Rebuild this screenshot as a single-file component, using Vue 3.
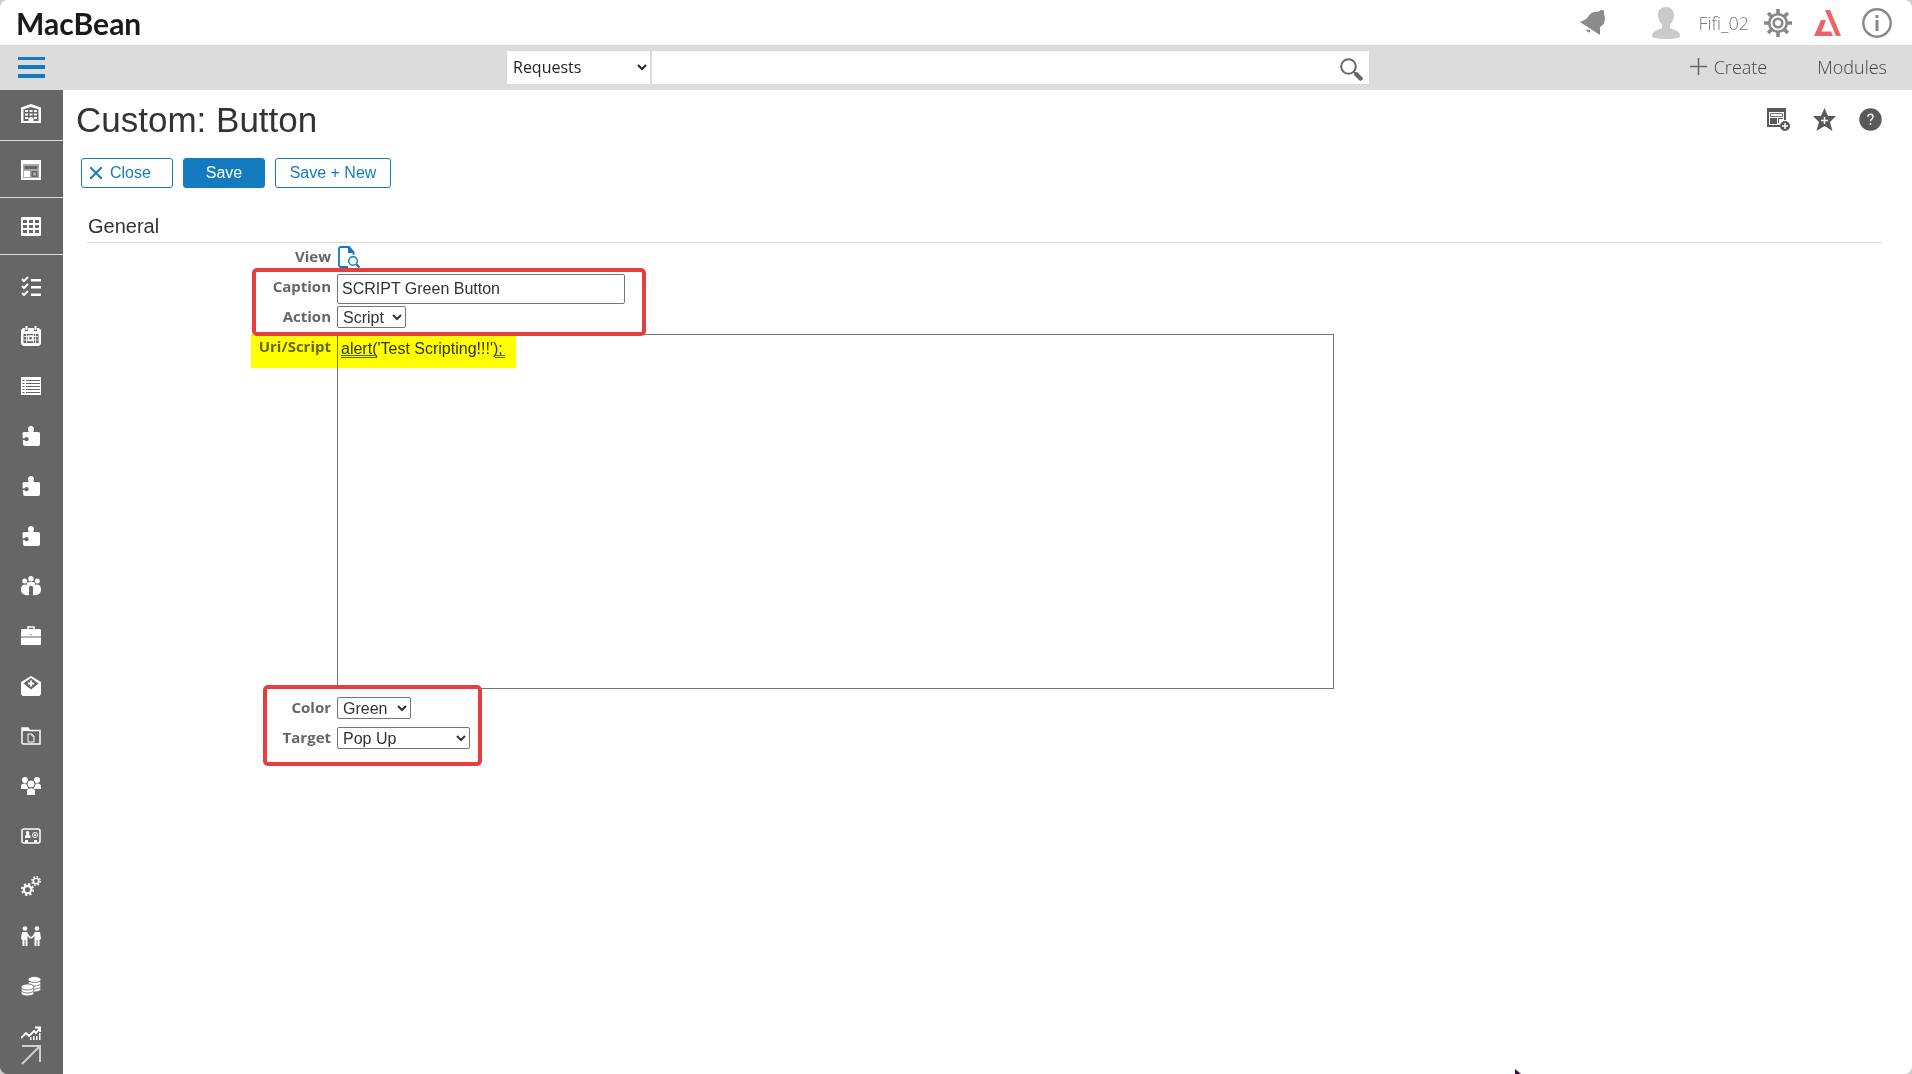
<script setup>
import { ref } from 'vue'

const scope = ref('Requests')
const query = ref('')
const caption = ref('SCRIPT Green Button')
const action = ref('Script')
const script = ref("alert('Test Scripting!!!');")
const color = ref('Green')
const target = ref('Pop Up')

const puzzle = '<path d="M1.500 7.500Q1.500 6 3 6h4c.8 0 .8-.6.4-1.100C6.200 2.500 7.600 0 10 0s3.800 2.500 2.600 4.900c-.4.5-.4 1.100.4 1.100h4.500q1.500 0 1.500 1.500v10.500q0 2-2 2H4q-2 0-2-2z"/><circle cx="5.500" cy="13.200" r="2.100" fill="#666"/><path d="M0 13.200h4" stroke="#666" stroke-width="1.600"/>'

const pinned = [
  { name: 'Company', svg: '<path d="M0 3.500 10 0l10 3.500V19H0z"/><path fill="#666" d="M2.500 5.200 10 3l7.500 2.200V17h-5v-3h-5v3h-5z"/><path d="M4 6h3v2H4zm4.500 0h3v2h-3zM13 6h3v2h-3zM4 9.500h3v2H4zm4.500 0h3v2h-3zm4.500 0h3v2h-3zM4 13h3v2H4zm4.500 0h3v5h-3zm4.500 0h3v2h-3z"/>' },
  { name: 'Portal', svg: '<path d="M0 0h20v20H0z"/><path fill="#aaa" d="M2 4h16v14H2z"/><path fill="#666" d="M3.500 6h13v3h-13zM10.500 11h6v6h-6z"/><path fill="#aaa" d="M12 12.500h3v3h-3z"/><path d="M3 11h6v6H3z"/>' },
  { name: 'Table', svg: '<rect width="20" height="19" rx="1"/><path fill="#666" d="M2 3h4v3H2zm6 0h4v3H8zm6 0h4v3h-4zM2 8h4v3H2zm6 0h4v3H8zm6 0h4v3h-4zM2 13h4v3H2zm6 0h4v3H8zm6 0h4v3h-4z"/>' }
]

const modules = [
  { name: 'Tasks', svg: '<path d="M10 3h10v2.500H10zm0 7h10v2.500H10zm0 7.500h10V20H10z"/><path fill="none" stroke="#fff" stroke-width="2" d="m1 3 2 2 4-4M1 10l2 2 4-4M1 17l2 2 4-4"/>' },
  { name: 'Calendar', svg: '<path d="M2 2h2v3h3V2h6v3h3V2h2l2 2v14l-2 2H2l-2-2V4z"/><path d="M4.500 0h2v4h-2zm9 0h2v4h-2z"/><path fill="#666" d="M2.500 8h15v9h-15z"/><path stroke="#fff" stroke-width=".8" d="M3 10.500h14M3 14h14M5.500 8v9m9-9v9m-2-9v9"/><path fill="none" stroke="#fff" stroke-width="1.500" d="M7.500 10h4v4.500h-4z"/>' },
  { name: 'List', svg: '<path d="M0 1h20v18H0z"/><path stroke="#666" d="M5 4.500h14M5 7.500h14m-14 3h14m-14 3h14m-14 3h14M1.500 4.500h2m-2 3h2m-2 3h2m-2 3h2m-2 3h2"/>' },
  { name: 'Add-on one', svg: puzzle },
  { name: 'Add-on two', svg: puzzle },
  { name: 'Add-on three', svg: puzzle },
  { name: 'Community', svg: '<circle cx="3.700" cy="5" r="2.500"/><circle cx="10" cy="2.700" r="2.700"/><circle cx="16.300" cy="5" r="2.500"/><path d="M6 7q4-2.500 8 0v5H6z"/><path d="M0 13.500Q0 8.500 4.500 8.500 8 9 8 12v7q-3 .8-5-.5-3-1.500-3-5zm20 0q0-5-4.500-5Q12 9 12 12v7q3 .8 5-.5 3-1.500 3-5z"/><circle cx="10" cy="12" r="2.200" fill="#666"/>' },
  { name: 'Briefcase', svg: '<path d="M1 3h18l1 1v6.500H0V4zM0 11.500h20V19H0z"/><path fill="none" stroke="#fff" stroke-width="1.500" d="M7 3V1h6v2"/><path fill="#666" d="M9.500 8h1v1.500h-1z"/>' },
  { name: 'Care mail', svg: '<path d="M0 6 10 0l10 6v12l-1.500 2h-17L0 18z"/><path fill="#666" d="m2.500 7.500 7.500-5.500 7.500 5.500-7.500 6z"/><path d="M9 4.500h2v2h2v2h-2v2H9v-2H7v-2h2z"/>' },
  { name: 'Documents', svg: '<path fill="none" stroke="#fff" stroke-width="1.500" d="M1 17V2h6l1.500 2.500H19V18H2z"/><path d="M1 2h6l1.500 3H1z"/><path fill="none" stroke="#fff" d="M7 8h4l2 2v6H7zM11 8v2h2"/>' },
  { name: 'Groups', svg: '<circle cx="4" cy="4" r="3"/><circle cx="16" cy="4" r="3"/><path d="M0 13V9q2-2 5-1.500L7 10v3zm20 0V9q-2-2-5-1.500L13 10v3z"/><circle cx="10" cy="8" r="4" stroke="#666"/><path d="M6 19v-4q0-3 4-2.500 4-.5 4 2.500v4z"/>' },
  { name: 'Contacts', svg: '<rect x="1" y="3" width="18" height="14" rx="2" fill="none" stroke="#fff" stroke-width="1.500"/><circle cx="6.500" cy="6.800" r="1.800"/><path d="M6 8h1.500l2 2v2H4v-2zM4 14h3v3H4zm9 0h3v3h-3z"/><circle cx="14" cy="9" r="2.500" fill="none" stroke="#fff"/><circle cx="14" cy="9" r="1"/>' },
  { name: 'Automation', svg: '<g fill="none" stroke="#fff"><circle cx="6.500" cy="13.500" r="3.700" stroke-width="2.200"/><circle cx="6.500" cy="13.500" r="5.600" stroke-width="2" stroke-dasharray="2.200 2.200"/><circle cx="15" cy="5" r="2.700" stroke-width="1.600"/><circle cx="15" cy="5" r="4.200" stroke-width="1.500" stroke-dasharray="1.650 1.650"/></g>' },
  { name: 'Partners', svg: '<circle cx="4" cy="2.500" r="2.300"/><circle cx="16" cy="2.500" r="2.300"/><path d="M1 6h5l2 3.500 2 1.500 2-1.500L14 6h5l1 7-1.500 1v6h-2v-6h-1v6h-2V10L11 12.500H9L6.500 10v10h-2v-6h-1v6h-2v-6L0 13z"/>' },
  { name: 'Finance', svg: '<g stroke="#666" stroke-width=".8"><ellipse cx="13.500" cy="13" rx="6.500" ry="3"/><ellipse cx="13.500" cy="10" rx="6.500" ry="3"/><ellipse cx="13.500" cy="7" rx="6.500" ry="3"/><ellipse cx="13.500" cy="3.500" rx="6.500" ry="3"/><ellipse cx="6.500" cy="17" rx="6.500" ry="3"/><ellipse cx="6.500" cy="14" rx="6.500" ry="3"/><ellipse cx="6.500" cy="11" rx="6.500" ry="3"/></g>' },
  { name: 'Reports', svg: '<path fill="none" stroke="#fff" stroke-width="1.800" d="m0 12 5-5 3 3 5-5 2 2 4-5M14 1.500h5.200V6"/><path d="M9 11h1.500v3H9zm3-1h1.500v4H12zm3 0h1.500v4H15zm3-3h1.500v7H18z"/>' }
]
</script>

<template>
  <div class="page">
    <header class="brand-bar">
      <strong class="logo">MacBean</strong>
      <div class="account">
        <button class="icon-btn bell" aria-label="Notifications">
          <svg width="26" height="26" viewBox="0 0 26 26" fill="#8b8b8b"><path d="M0 12Q6 10 9 5.500 12 1 18 1.800L21 0l3 .500V4q3 9-4 13v8z" /><path d="M6 19.500q1 3 4 3V20z" /></svg>
        </button>
        <button class="icon-btn person" aria-label="Profile">
          <svg width="28" height="32" viewBox="0 0 28 32" fill="#cacaca"><path d="M14 0c5 0 8 3 8 8 0 4-1.500 7-4 9.500v3.500l7 3q3 1.500 3 6-4 2-14 2T0 30q0-4.500 3-6l7-3v-3.500C7.500 15 6 12 6 8c0-5 3-8 8-8z" /></svg>
        </button>
        <a class="user" href="#">Fifi_02</a>
        <button class="icon-btn gear" aria-label="Settings">
          <svg width="28" height="28" viewBox="0 0 28 28" fill="none" stroke="#888"><circle cx="14" cy="14" r="8.800" stroke-width="2.600" /><circle cx="14" cy="14" r="4.300" stroke-width="2.600" /><path stroke-width="3.600" d="M14 0v5M14 23v5M0 14h5M23 14h5M4.100 4.100l3.500 3.500M20.400 20.400l3.500 3.500M4.100 23.900l3.500-3.500M20.400 7.600l3.500-3.500" /></svg>
        </button>
        <button class="icon-btn mark" aria-label="Apps">
          <svg width="28" height="26" viewBox="0 0 28 26" fill="#ed6268"><path d="M11 0h5l11 26h-5zM7 10h5L7.500 21.500H17l2 4.500H0z" /></svg>
        </button>
        <button class="icon-btn" aria-label="Information">
          <svg width="30" height="30" viewBox="0 0 30 30"><circle cx="15" cy="15" r="13.700" fill="none" stroke="#888" stroke-width="2.400" /><path fill="#888" d="M13.500 7h3v3h-3zm0 5h3v11h-3z" /></svg>
        </button>
      </div>
    </header>

    <nav class="tool-bar">
      <button class="icon-btn menu" aria-label="Menu">
        <svg width="27" height="21" viewBox="0 0 27 21" fill="#147abf"><path d="M0 0h27v3H0zm0 8h27v4H0zm0 9h27v4H0z" /></svg>
      </button>
      <form class="search" @submit.prevent>
        <select v-model="scope" aria-label="Search in"><option>Requests</option></select>
        <div class="search-box">
          <input v-model="query" type="text" aria-label="Search" />
          <button class="icon-btn" aria-label="Run search">
            <svg width="23" height="23" viewBox="0 0 23 23" fill="none" stroke="#666"><circle cx="8.500" cy="8.500" r="7.300" stroke-width="2" /><path d="m13.500 13.500 3 3" stroke-width="2" /><path d="m16.500 16.500 4 4" stroke-width="4.500" stroke-linecap="round" /></svg>
          </button>
        </div>
      </form>
      <div class="links">
        <a href="#"><svg width="17" height="17" viewBox="0 0 17 17" stroke="#666" stroke-width="1.500"><path d="M8.500 0v17M0 8.500h17" /></svg>Create</a>
        <a href="#">Modules</a>
      </div>
    </nav>

    <div class="body">
      <aside class="side">
        <div class="side-list">
          <a v-for="item in pinned" :key="item.name" class="pin" href="#" :aria-label="item.name">
            <svg width="20" height="20" viewBox="0 0 20 20" fill="#fff" v-html="item.svg"></svg>
          </a>
          <div class="modules">
            <a v-for="item in modules" :key="item.name" href="#" :aria-label="item.name">
              <svg width="20" height="20" viewBox="0 0 20 20" fill="#fff" v-html="item.svg"></svg>
            </a>
          </div>
        </div>
        <button class="expand" aria-label="Expand">
          <svg width="20" height="20" viewBox="0 0 20 20" fill="none" stroke="#d0d0d0" stroke-width="2"><path d="M1 1h18v16M19 1 1 19" /></svg>
        </button>
      </aside>

      <main class="content">
        <div class="title-row">
          <h1>Custom: Button</h1>
          <div class="page-tools">
            <button class="icon-btn" aria-label="Add to portal">
              <svg width="23" height="23" viewBox="0 0 23 23"><path fill="#595959" d="M0 0h19v12h-2V4H2v13h11v2H0z" /><path fill="none" stroke="#777" d="M3.500 5.500h12v3h-12z" /><path fill="#595959" d="M3 10h7v6H3zm8 0h5v1h-4v4h-1z" /><circle cx="18" cy="18" r="5" fill="#595959" /><path stroke="#fff" stroke-width="1.500" d="M18 15v6m-3-3h6" /></svg>
            </button>
            <button class="icon-btn" aria-label="Add to favorites">
              <svg width="23" height="23" viewBox="0 0 23 23"><path fill="#595959" d="m11.500 0 3.500 8h8l-6 6 2.500 9-8-5-8 5L6 14 0 8h8z" /><path stroke="#fff" stroke-width="1.500" d="M11.500 9v7M8 12.500h7" /></svg>
            </button>
            <button class="icon-btn" aria-label="Help">
              <svg width="23" height="23" viewBox="0 0 23 23"><circle cx="11.500" cy="11.500" r="11.200" fill="#595959" /><path fill="none" stroke="#fff" stroke-width="1.400" d="M9 8.800q0-2.600 2.500-2.600T14 8.800q0 1.400-1.300 2.300-1.200.8-1.200 2.200M11.500 15v1.800" /></svg>
            </button>
          </div>
        </div>

        <div class="actions">
          <button class="btn close"><svg width="12" height="12" viewBox="0 0 12 12" stroke="#147abf" stroke-width="2"><path d="m0 0 12 12M12 0 0 12" /></svg>Close</button>
          <button class="btn primary">Save</button>
          <button class="btn">Save + New</button>
        </div>

        <section class="general">
          <h2>General</h2>
          <form class="fields" @submit.prevent>
            <div class="row">
              <span class="label">View</span>
              <button class="icon-btn view" aria-label="View">
                <svg width="22" height="22" viewBox="0 0 22 22" fill="none" stroke="#147abf"><path stroke-width="1.800" d="M10 21H3q-2 0-2-2V3q0-2 2-2h8l4.500 5v3" /><path fill="#147abf" stroke="none" d="M10 0v7h6.500z" /><circle cx="15" cy="15" r="4.300" stroke-width="1.500" /><path stroke-width="2" d="m18 18 3.500 3.500" /></svg>
              </button>
            </div>
            <div class="row">
              <label for="caption">Caption</label>
              <input id="caption" v-model="caption" type="text" />
            </div>
            <div class="row">
              <label for="action">Action</label>
              <select id="action" v-model="action" class="action"><option>Script</option></select>
            </div>
            <div class="row script-row">
              <label for="script">Uri/Script</label>
              <div class="editor">
                <textarea id="script" v-model="script" spellcheck="false"></textarea>
                <i class="hint hint-call"></i>
                <i class="hint hint-end"></i>
              </div>
            </div>
            <div class="row">
              <label for="color">Color</label>
              <select id="color" v-model="color" class="color"><option>Green</option></select>
            </div>
            <div class="row">
              <label for="target">Target</label>
              <select id="target" v-model="target" class="target"><option>Pop Up</option></select>
            </div>
            <div class="highlight"></div>
            <div class="frame frame-top"></div>
            <div class="frame frame-bottom"></div>
          </form>
        </section>
      </main>
    </div>
    <svg class="cursor" width="8" height="5" viewBox="0 0 8 5"><path fill="#3a0f35" d="M0 0v5h6z" /></svg>
  </div>
</template>

<style>
body { background: #cfcfcf; }
</style>

<style scoped>
* { box-sizing: border-box; }
.page {
  position: relative;
  display: flex;
  flex-direction: column;
  height: 100vh;
  overflow: hidden;
  border-radius: 8px;
  background: #fff;
  color: #333;
  font: 16px "Liberation Sans", Arial, sans-serif;
}
svg { display: block; flex: none; }
a { color: inherit; text-decoration: none; }
.icon-btn { padding: 0; border: 0; background: none; }

.brand-bar {
  display: flex;
  align-items: center;
  justify-content: space-between;
  flex: none;
  height: 45px;
  padding: 0 20px 0 16px;
}
.logo { color: #1a1a1a; font: 700 30px/44px Lato, sans-serif; }
.account { display: flex; align-items: center; }
.bell { margin-right: 46px; }
.person { height: 38px; margin-right: 18px; }
.user { margin-right: 15px; color: #777; font: 300 18px/24px "Open Sans", sans-serif; }
.gear { margin-right: 22px; }
.mark { margin-right: 20px; }

.tool-bar {
  display: grid;
  grid-template-columns: 507px 1fr 543px;
  align-items: center;
  flex: none;
  height: 45px;
  background: #dcdcdc;
}
.menu { justify-self: start; margin-left: 18px; }
.search { display: flex; gap: 2px; height: 33px; }
.search select {
  width: 143px;
  padding: 0 2px 2px;
  border: 0;
  border-radius: 0;
  background-color: #fff;
  color: #222;
  font: 16px "Open Sans", sans-serif;
}
.search-box { display: flex; align-items: center; flex: 1; padding: 4px 6px 0 0; background: #fff; }
.search-box input { flex: 1; min-width: 0; height: 29px; border: 0; background: none; font: 16px "Open Sans", sans-serif; }
.links { display: flex; justify-content: flex-end; gap: 50px; padding: 0 25px 2px 0; color: #444; font: 300 18px/24px "Open Sans", sans-serif; }
.links a { display: flex; align-items: center; gap: 7px; }

.body { display: flex; flex: 1; min-height: 0; }
.side { display: flex; flex-direction: column; flex: none; width: 63px; background: #666; }
.side-list { flex: 1; min-height: 0; overflow: hidden; }
.side-list a { display: flex; align-items: center; justify-content: center; height: 50px; padding-right: 1px; }
.side-list .pin { height: 57px; padding-top: 2px; border-bottom: 1px solid #dcdcdc; }
.side-list .pin:first-child { height: 51px; padding: 0 1px 3px 0; }
.modules { padding-top: 6px; }
.expand { height: 34px; padding: 0 0 5px 21px; border: 0; background: #666; }

.content { flex: 1; min-width: 0; padding: 11px 30px 0 13px; }
.title-row { display: flex; align-items: center; justify-content: space-between; height: 38px; }
h1 { margin: 0; font-size: 35px; font-weight: 400; line-height: 38px; }
.page-tools { display: flex; gap: 23px; padding-bottom: 2px; }
.actions { display: flex; gap: 10px; padding: 19px 0 0 5px; }
.btn {
  width: 116px;
  height: 30px;
  padding: 0;
  border: 1px solid #147abf;
  border-radius: 3px;
  background: #fff;
  color: #147abf;
  font: 16px "Liberation Sans", Arial, sans-serif;
}
.btn.close { display: flex; align-items: center; gap: 8px; width: 92px; padding: 0 8px; }
.btn.primary { width: 82px; background: #147abf; color: #fff; }

.general { padding: 24px 0 0 11px; }
h2 { margin: 0; padding: 0 0 2px 1px; border-bottom: 1px solid #dcdcdc; font-size: 20px; font-weight: 400; line-height: 28px; }
.fields { position: relative; padding-top: 1px; }
.row { display: grid; grid-template-columns: 244px 1fr; align-items: start; column-gap: 6px; min-height: 30px; }
.row label, .label { color: #666; text-align: right; font: bold 15px/24px "Open Sans", sans-serif; }
.row select, .row > input, textarea {
  justify-self: start;
  border: 1px solid #767676;
  background-color: #fff;
  color: #333;
  font: 16px "Liberation Sans", Arial, sans-serif;
}
.row select { height: 22px; margin-top: 2px; padding: 0 1px; border-radius: 2px; }
.row > input { width: 288px; height: 30px; padding: 0 4px; border-radius: 2px; }
.row .action { width: 69px; }
.row .color { width: 74px; }
.row .target { width: 133px; }
.view { justify-self: start; margin-top: 2px; padding-left: 1px; }
.script-row { padding-bottom: 6px; }
.editor { position: relative; padding-right: 548px; }
textarea { display: block; width: 100%; height: 355px; padding: 5px 3px; line-height: 18px; resize: none; border-radius: 0; }
.hint { position: absolute; z-index: 2; top: 21px; height: 3px; border-bottom: 3px double #47682c; }
.hint-call { left: 4px; width: 36px; }
.hint-end { left: 158px; width: 10px; }
.highlight { position: absolute; top: 91px; left: 164px; width: 265px; height: 34px; background: #ff0; mix-blend-mode: multiply; pointer-events: none; }
.frame { position: absolute; border: 4px solid #e63f42; border-radius: 5px; pointer-events: none; }
.frame-top { top: 25px; left: 165px; width: 394px; height: 68px; }
.frame-bottom { top: 442px; left: 176px; width: 219px; height: 81px; }
.cursor { position: absolute; right: 389px; bottom: 0; }
</style>
